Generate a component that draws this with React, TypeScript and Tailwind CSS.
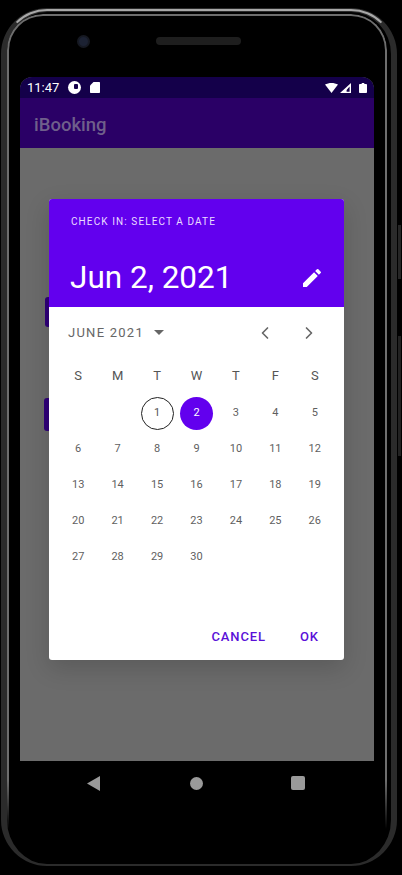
import { ChevronLeft, ChevronRight } from "lucide-react";

const weekDays = ["S", "M", "T", "W", "T", "F", "S"];
const days: (number | null)[] = [null, null, 1, 2, 3, 4, 5];
for (let d = 6; d <= 30; d++) days.push(d);

function StatusIcons() {
  return (
    <div className="flex items-center gap-[2px]">
      <svg width="13" height="10" viewBox="0 0 13 10">
        <path d="M0 1.6C3.6 -0.5 9.4 -0.5 13 1.6L6.5 10Z" fill="#fff" />
      </svg>
      <svg width="11" height="10" viewBox="0 0 11 10">
        <path d="M11 0V10H0ZM9.6 3.6L6.6 7V8.8H9.6Z" fill="#fff" />
      </svg>
      <svg width="8" height="10" viewBox="0 0 8 10" className="ml-[6px]">
        <path d="M2.7 0H5.3V1H7.2C7.6 1 8 1.3 8 1.8V9.2C8 9.6 7.6 10 7.2 10H0.8C0.4 10 0 9.6 0 9.2V1.8C0 1.3 0.4 1 0.8 1H2.7Z" fill="#fff" />
      </svg>
    </div>
  );
}

function DayCell({ day }: { day: number | null }) {
  if (day === null) return <div />;
  if (day === 1) {
    return (
      <div className="flex items-center justify-center">
        <span className="flex h-[33px] w-[33px] items-center justify-center rounded-full border border-[#222] text-[#555]">{day}</span>
      </div>
    );
  }
  if (day === 2) {
    return (
      <div className="flex items-center justify-center">
        <span className="flex h-[33px] w-[33px] items-center justify-center rounded-full bg-[#6200ee] text-white">{day}</span>
      </div>
    );
  }
  return <div className="flex items-center justify-center text-[#5f5f5f]">{day}</div>;
}

export default function App() {
  return (
    <div className="relative h-[875px] w-[402px] overflow-hidden bg-black pt-[77px] pl-[20px] font-['Roboto',sans-serif]">
      {/* device frame */}
      <div className="pointer-events-none absolute top-[8px] left-[1px] h-[858px] w-[396px] rounded-[46px] border-x-[6px] border-t-[4px] border-b-[2px] border-[#2b2b2b]" />
      <div className="pointer-events-none absolute top-[9px] left-[3px] h-[70px] w-[392px] rounded-t-[44px] border-x-[2px] border-t-[2px] border-x-transparent border-t-[#a8a8a8]" />
      <div className="pointer-events-none absolute top-[14px] left-[7px] h-[815px] w-[380px] rounded-t-[36px] border-x-[2px] border-t-[2px] border-[#6e6e6e] [mask-image:linear-gradient(to_bottom,black_94%,transparent)]" />
      <div className="absolute top-[225px] left-[398px] h-[54px] w-[3px] bg-[#262626]" />
      <div className="absolute top-[336px] left-[398px] h-[120px] w-[3px] bg-[#222]" />
      <div className="absolute top-[35px] left-[77px] h-[13px] w-[13px] rounded-full border-[2px] border-[#161922] bg-[#1c2233]" />
      <div className="absolute top-[37px] left-[156px] h-[8px] w-[85px] rounded-full bg-[#1e1e1e]" />

      <div className="relative flex h-[684px] w-[354px] flex-col overflow-hidden rounded-t-[12px] bg-[#6b6b6b]">
        <div className="flex h-[21px] shrink-0 items-center justify-between bg-[#14004a] pr-[7px] pl-[7px]">
          <div className="flex items-center">
            <span className="w-[31px] text-[13px] leading-none text-white">11:47</span>
            <span className="ml-[10px] flex h-[13px] w-[13px] items-center justify-center rounded-full bg-white">
              <span className="mb-[2px] ml-[3px] h-[5px] w-[4px] rounded-[1px] bg-[#14004a]" />
            </span>
            <svg width="10" height="11" viewBox="0 0 10 11" className="ml-[9px]">
              <path d="M3.5 0H9C9.6 0 10 0.4 10 1V10C10 10.6 9.6 11 9 11H1C0.4 11 0 10.6 0 10V3.5Z" fill="#fff" />
            </svg>
          </div>
          <StatusIcons />
        </div>
        <div className="flex h-[50px] shrink-0 items-center bg-[#2a0066] pt-[5px] pl-[14px] text-[18.5px] font-medium text-[#6f5f8b]">iBooking</div>

        {/* dimmed buttons behind the dialog */}
        <div className="absolute top-[220px] left-[25px] h-[30px] w-[8px] rounded-l-[3px] bg-[#2f0078]" />
        <div className="absolute top-[321px] left-[24px] h-[33px] w-[8px] rounded-l-[3px] bg-[#2f0078]" />

        <div className="relative mt-[51px] ml-[29px] flex h-[461px] w-[295px] flex-col overflow-hidden rounded-[3px] bg-white shadow-[0_8px_24px_rgba(0,0,0,0.16)]">
          <div className="flex h-[108px] shrink-0 flex-col bg-[#6200ee] pt-[17px] pr-[20px] pl-[22px]">
            <p className="text-[10px] leading-[12px] tracking-[1.1px] text-[#eadcff]">CHECK IN: SELECT A DATE</p>
            <div className="mt-[30px] flex items-center justify-between">
              <span className="-ml-[1px] text-[31.5px] leading-[40px] text-white">Jun 2, 2021</span>
              <svg width="24" height="24" viewBox="0 0 24 24" fill="#fff">
                <path d="M3 17.25V21h3.75L17.81 9.94l-3.75-3.75L3 17.25zM20.71 7.04a1 1 0 0 0 0-1.41l-2.34-2.34a1 1 0 0 0-1.41 0l-1.83 1.83 3.75 3.75 1.83-1.83z" />
              </svg>
            </div>
          </div>

          <div className="flex h-[50px] shrink-0 items-center pt-[1px] pr-[25px] pl-[19px] text-[#666]">
            <span className="text-[13px] tracking-[1.25px]">JUNE 2021</span>
            <svg width="10" height="5" viewBox="0 0 10 5" className="ml-[10px]">
              <path d="M0 0H10L5 5Z" fill="#666" />
            </svg>
            <ChevronLeft size={20} strokeWidth={2} className="ml-auto" />
            <ChevronRight size={20} strokeWidth={2} className="ml-[24px]" />
          </div>

          <div className="grid shrink-0 grid-cols-7 px-[9.5px] text-[13px] text-[#555]">
            {weekDays.map((d, i) => (
              <div key={i} className="flex h-[38px] items-center justify-center">{d}</div>
            ))}
          </div>
          <div className="grid shrink-0 auto-rows-[36px] grid-cols-7 px-[9.5px] text-[11px]">
            {days.map((d, i) => (
              <DayCell key={i} day={d} />
            ))}
          </div>

          <div className="mt-auto flex h-[46px] items-center justify-end gap-[34px] pr-[25px] text-[13px] font-medium tracking-[0.9px] text-[#5a10d8]">
            <span>CANCEL</span>
            <span>OK</span>
          </div>
        </div>
      </div>

      {/* nav bar */}
      <div className="flex h-[44px] w-[354px] items-center">
        <svg width="13" height="15" viewBox="0 0 13 15" className="ml-[67px]">
          <path d="M13 0V15L0 7.5Z" fill="#9a9a9a" />
        </svg>
        <span className="ml-[90px] h-[13px] w-[13px] rounded-full bg-[#9a9a9a]" />
        <span className="ml-[88px] h-[14px] w-[14px] rounded-[2px] bg-[#9a9a9a]" />
      </div>
    </div>
  );
}
